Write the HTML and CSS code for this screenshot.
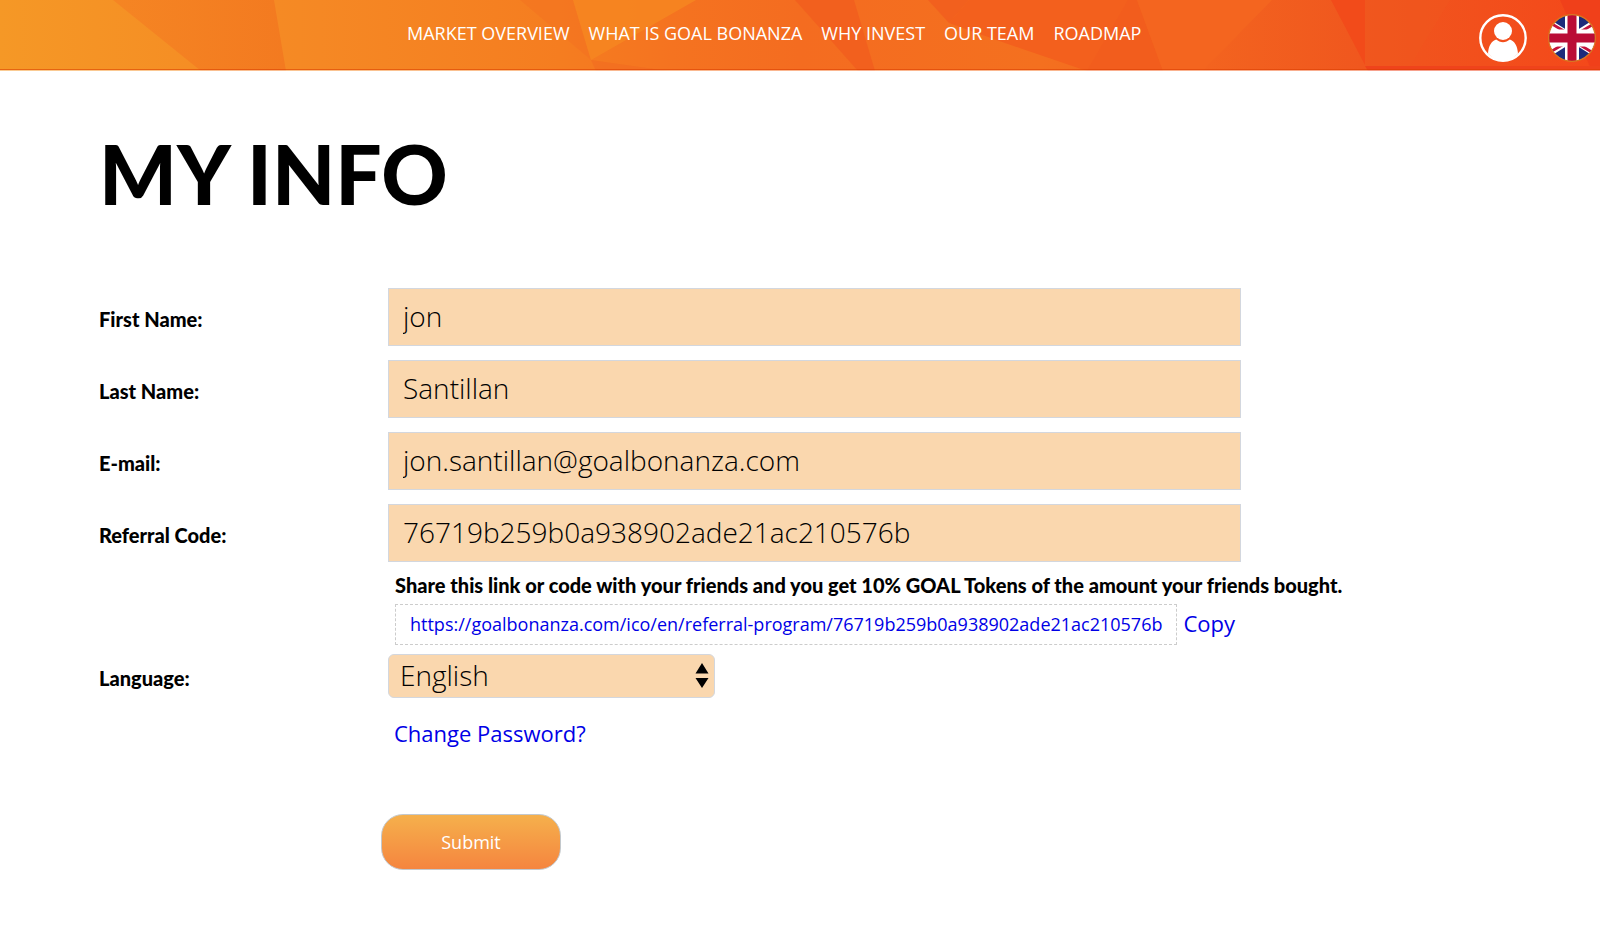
FILE: index.html
```html
<!DOCTYPE html>
<html lang="en">
<head>
<meta charset="utf-8">
<meta name="viewport" content="width=device-width, initial-scale=1">
<title>My Info</title>
<link rel="stylesheet" href="styles.css">
</head>
<body>
<header class="header">
  <svg class="header-art" viewBox="0 0 1600 71" preserveAspectRatio="none" aria-hidden="true">
    <defs>
      <linearGradient id="base" gradientUnits="userSpaceOnUse" x1="0" y1="0" x2="1600" y2="0">
        <stop offset="0" stop-color="#f59826"/>
        <stop offset="0.12" stop-color="#f58e24"/>
        <stop offset="0.2" stop-color="#f58824"/>
        <stop offset="0.35" stop-color="#f57d20"/>
        <stop offset="0.42" stop-color="#f57320"/>
        <stop offset="0.5" stop-color="#f46c20"/>
        <stop offset="0.65" stop-color="#f4701f"/>
        <stop offset="0.75" stop-color="#f3641f"/>
        <stop offset="0.85" stop-color="#f0571e"/>
        <stop offset="1" stop-color="#f4481a"/>
      </linearGradient>
      <linearGradient id="wedge" x1="0" y1="0" x2="1" y2="0">
        <stop offset="0" stop-color="#f58523"/>
        <stop offset="1" stop-color="#f37a20"/>
      </linearGradient>
    </defs>
    <path fill="url(#base)" d="M0 0H1600V71H0z"/>
    <path fill="url(#wedge)" d="M113 0H274L286 71H201z"/>
    <path fill="#f36f20" opacity=".4" d="M520 0H573L591 60z"/>
    <path fill="#f68720" opacity=".8" d="M573 0H696L591 60z"/>
    <path fill="#f1681f" opacity=".5" d="M591 60L596 71H668z"/>
    <path fill="#f2601e" d="M795 0H854L875 71H858z"/>
    <path fill="#f2601e" d="M928 0H969L949 23z"/>
    <path fill="#f3601d" d="M969 0H1137L1163 71H1087L1005 43L949 23z"/>
    <path fill="#f2591d" opacity=".5" d="M1128 0L1087 71H1163L1137 0z"/>
    <path fill="#f4651f" d="M1137 0H1272L1203 71H1163z"/>
    <path fill="#f24b1a" d="M1331 0H1365V65z"/>
    <path fill="#f0561e" opacity=".6" d="M1365 0H1450L1410 66H1365z"/>
    <path fill="#f0401a" d="M1560 0H1600V71H1592z"/>
    <path fill="#ef431b" d="M1365 66H1600V71H1368z"/>
    <path fill="#d83c00" opacity=".55" d="M0 69H1600V70H0z"/>
    <path fill="#fff" opacity=".5" d="M0 70H1600V71H0z"/>
  </svg>
  <nav class="nav">
    <a href="#market">MARKET OVERVIEW</a>
    <a href="#what">WHAT IS GOAL BONANZA</a>
    <a href="#why">WHY INVEST</a>
    <a href="#team">OUR TEAM</a>
    <a href="#roadmap">ROADMAP</a>
  </nav>
  <div class="tools">
    <a href="#account" aria-label="Account">
      <svg width="48" height="48" viewBox="0 0 48 48">
        <circle cx="24" cy="24" r="22.7" fill="none" stroke="#fff" stroke-width="2.4"/>
        <circle cx="24" cy="17" r="9" fill="#fff"/>
        <path fill="#fff" d="M9 39.500C9.500 32 12.500 27 17.200 25.600C21 29 27 29 30.800 25.600C35.500 27 38.500 32 39 39.500C35 44 30 46.500 24 46.500S13 44 9 39.500z"/>
      </svg>
    </a>
    <a href="#language" aria-label="English">
      <svg width="48" height="48" viewBox="0 0 48 48">
        <defs><clipPath id="disc"><circle cx="24" cy="24" r="23.400"/></clipPath></defs>
        <g clip-path="url(#disc)">
          <path fill="#1d2a7b" d="M0 0H48V48H0z"/>
          <path stroke="#fff" stroke-width="8" d="M-8 4L56 44M56 4L-8 44"/>
          <path stroke="#c4123c" stroke-width="2.800" d="M-8 3L20 19.500M54 5L28 20.500M-6 43L20 27.500M28 28.500L56 45.500"/>
          <path stroke="#fff" stroke-width="17" d="M0 24H48"/>
          <path stroke="#fff" stroke-width="14" d="M24 0V48"/>
          <path stroke="#ba0c36" stroke-width="9" d="M24 0V48M0 24H48"/>
        </g>
        <circle cx="24" cy="24" r="23.400" fill="none" stroke="#d9781f" stroke-width="1.200"/>
      </svg>
    </a>
  </div>
</header>
<main class="page">
  <h1 class="title">MY INFO</h1>
  <form class="form">
    <label class="label" for="first">First Name:</label>
    <input class="field" id="first" type="text" value="jon">
    <label class="label" for="last">Last Name:</label>
    <input class="field" id="last" type="text" value="Santillan">
    <label class="label" for="email">E-mail:</label>
    <input class="field" id="email" type="email" value="jon.santillan@goalbonanza.com">
    <label class="label" for="code">Referral Code:</label>
    <input class="field" id="code" type="text" value="76719b259b0a938902ade21ac210576b">
    <div class="share">
      <p class="share-text">Share this link or code with your friends and you get 10% GOAL Tokens of the amount your friends bought.</p>
      <div class="share-row">
        <a class="share-link" href="#referral">https://goalbonanza.com/ico/en/referral-program/76719b259b0a938902ade21ac210576b</a>
        <a class="link" href="#copy">Copy</a>
      </div>
    </div>
    <label class="label" for="lang">Language:</label>
    <div class="select-wrap">
      <select class="select" id="lang"><option>English</option></select>
      <svg class="arrows" width="14" height="26" viewBox="0 0 14 26" aria-hidden="true"><path d="M7 0L13.500 10.500H.5zM.5 15H13.500L7 25z"/></svg>
    </div>
    <a class="link change" href="#password">Change Password?</a>
    <button class="submit" type="submit">Submit</button>
  </form>
</main>
</body>
</html>
```
FILE: styles.css
```css
* { box-sizing: border-box; }
body {
  margin: 0;
  background: #fff;
  color: #000;
  font-family: "Open Sans", sans-serif;
}
a { text-decoration: none; }

.header {
  position: relative;
  display: flex;
  justify-content: space-between;
  height: 71px;
  padding: 14px 4px 0 407px;
}
.header-art {
  position: absolute;
  inset: 0;
  width: 100%;
  height: 100%;
}
.nav {
  position: relative;
  display: flex;
  gap: 19px;
  padding-top: 7px;
  font-size: 18px;
  line-height: 24px;
  white-space: nowrap;
}
.nav a { color: #fff; }
.tools {
  position: relative;
  display: flex;
  gap: 21px;
}
.tools svg { display: block; }

.page { padding: 62px 99px 56px; }
.title {
  margin: 0 0 75px;
  font: 900 82px/80px Lato, sans-serif;
}
.form {
  display: grid;
  grid-template-columns: 289fr 853fr 260fr;
  row-gap: 14px;
}
.label {
  grid-column: 1;
  align-self: center;
  padding-top: 4px;
  font: 900 20px/28px Lato, sans-serif;
}
.field {
  grid-column: 2;
  width: 100%;
  height: 58px;
  padding: 0 14px 2px;
  border: 1px solid #d3d7de;
  border-radius: 0;
  background: #fad7ae;
  color: #000;
  font: 300 28px "Open Sans", sans-serif;
}
.share {
  grid-column: 2 / 4;
  margin: -5px 0 -5px;
  padding-left: 7px;
}
.share-text {
  margin: 0;
  font: 900 20px/28px Lato, sans-serif;
  white-space: nowrap;
}
.share-row {
  display: flex;
  gap: 6px;
  margin-top: 5px;
}
.share-link {
  padding: 0 14px;
  border: 1px dashed #ccc;
  color: #0000e6;
  font-size: 18px;
  line-height: 39px;
}
.link {
  color: #0000e6;
  font-size: 22px;
  line-height: 38px;
}
.select-wrap {
  position: relative;
  grid-column: 2;
  justify-self: start;
  width: 327px;
  max-width: 100%;
}
.select {
  display: block;
  width: 100%;
  height: 44px;
  padding: 0 11px 2px;
  border: 1px solid #d3d7de;
  border-radius: 6px;
  appearance: none;
  background: #fad7ae;
  color: #000;
  font: 300 28px "Open Sans", sans-serif;
}
.arrows {
  position: absolute;
  top: 9px;
  right: 6px;
  pointer-events: none;
}
.change {
  grid-column: 2;
  justify-self: start;
  margin: 2px 0 48px 6px;
}
.submit {
  grid-column: 2;
  justify-self: start;
  width: 180px;
  height: 56px;
  margin-left: -7px;
  border: 1px solid #c3c8cc;
  border-radius: 22px;
  background: linear-gradient(#f5b04c, #f5853f);
  color: #fff;
  font: 18px "Open Sans", sans-serif;
}
```
